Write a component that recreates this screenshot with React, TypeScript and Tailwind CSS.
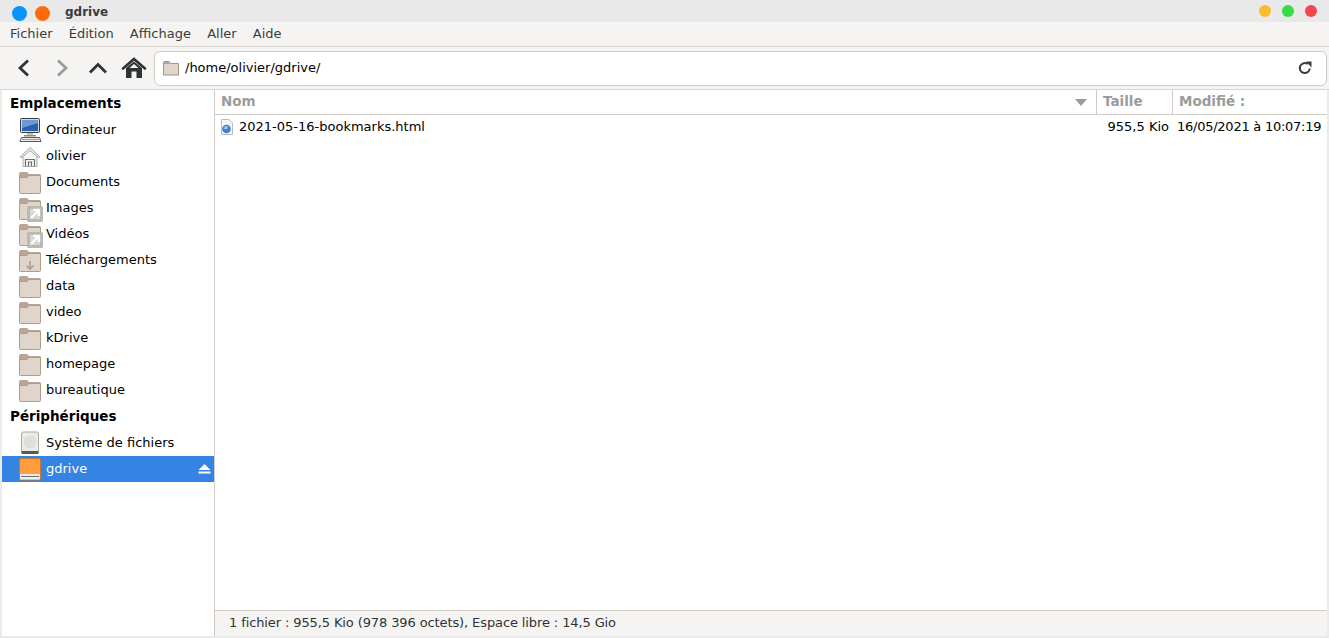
const Folder = ({ children }: { children?: React.ReactNode }) => (
  <svg width="24" height="24" viewBox="0 0 24 24" className="shrink-0 overflow-visible">
    <path d="M1 4Q1 2 3 2H9L11 4H21.500Q23 4 23 5.500V9H1Z" fill="#b9a595" />
    <path d="M1.500 7.500L9 7.500L11 5.500H22.500V22.500Q22.500 23.500 21.500 23.500H2.500Q1.500 23.500 1.500 22.500Z" fill="#dfd5ca" stroke="#b09c8c" strokeWidth="1" />
    {children}
  </svg>
);

const LinkFolder = () => (
  <Folder>
    <rect x="9" y="10" width="16" height="16" rx="1.500" fill="#b9b9b6" />
    <rect x="12" y="13" width="10" height="10" fill="#d6d6d3" />
    <path d="M13 22L20.500 14.500M15 14H21V20" fill="none" stroke="#ffffff" strokeWidth="2.400" />
  </Folder>
);

const DownloadFolder = () => (
  <Folder>
    <path d="M12 13V21M8.500 17.500L12 21L15.500 17.500" fill="none" stroke="#b09c8c" strokeWidth="1.600" />
  </Folder>
);

const Computer = () => (
  <svg width="24" height="24" viewBox="0 0 24 24" className="shrink-0 overflow-visible">
    <rect x="2.500" y="0.500" width="19" height="14" rx="1" fill="#d8d8d6" stroke="#3a3d3f" strokeWidth="1" />
    <rect x="4" y="2" width="16" height="11" fill="#2a62b0" />
    <path d="M4 2H20V5L4 10Z" fill="#6c9ad6" />
    <rect x="9" y="15" width="6" height="2.500" fill="#c2c2bf" />
    <rect x="6" y="17" width="12" height="1.500" fill="#8a8c8c" />
    <path d="M3.500 19.500H21.500L23 23.500H2Z" fill="#efefec" stroke="#55595c" strokeWidth="1" />
    <path d="M4 21.500H21" stroke="#9a9c9c" strokeWidth="1" />
  </svg>
);

const HomeOutline = () => (
  <svg width="24" height="24" viewBox="0 0 24 24" className="shrink-0 overflow-visible">
    <path d="M5 11V22.500H19V11L12 5Z" fill="#f7f7f5" stroke="#a9a9a6" strokeWidth="1" />
    <path d="M2 13L12 3.500L22 13L20 13.500L12 6.500L4 13.500Z" fill="#ecece9" stroke="#a9a9a6" strokeWidth="1" strokeLinejoin="round" />
    <path d="M7.500 22V15.500H16.500V22M10.500 22V18H13.500V22" fill="none" stroke="#6f6f6c" strokeWidth="1.200" />
  </svg>
);

const Disk = () => (
  <svg width="24" height="24" viewBox="0 0 24 24" className="shrink-0">
    <rect x="3.500" y="1" width="17" height="21.500" rx="2" fill="#ebebe8" stroke="#a9a9a6" strokeWidth="1" />
    <circle cx="12" cy="11" r="6.500" fill="#dededb" />
    <rect x="3.500" y="20" width="17" height="3" rx="1" fill="#55595c" />
  </svg>
);

const OrangeDrive = () => (
  <svg width="24" height="24" viewBox="0 0 24 24" className="shrink-0">
    <rect x="1.500" y="1.500" width="21" height="21.500" rx="1.500" fill="#ff9c3f" stroke="#c9762e" strokeWidth="1" />
    <rect x="2" y="17" width="20" height="5.500" fill="#efefec" />
    <rect x="3" y="19" width="18" height="1" fill="#6f6f6c" />
  </svg>
);

const Row = ({ icon, label }: { icon: React.ReactNode; label: string }) => (
  <div className="flex h-[26px] items-center gap-[4px] pl-[16px] text-black">
    {icon}
    <span>{label}</span>
  </div>
);

const places: [React.ReactNode, string][] = [
  [<Computer />, "Ordinateur"],
  [<HomeOutline />, "olivier"],
  [<Folder />, "Documents"],
  [<LinkFolder />, "Images"],
  [<LinkFolder />, "Vidéos"],
  [<DownloadFolder />, "Téléchargements"],
  [<Folder />, "data"],
  [<Folder />, "video"],
  [<Folder />, "kDrive"],
  [<Folder />, "homepage"],
  [<Folder />, "bureautique"],
];

export default function App() {
  return (
    <div className="flex h-[638px] w-[1329px] flex-col overflow-hidden bg-[#eaeaea] text-[13px] text-[#2e3436] [font-family:'DejaVu_Sans',sans-serif]">
      <div className="flex h-[22px] shrink-0 items-center bg-[#e9e9e9] pl-[12px] pr-[12px]">
        <span className="mt-[4px] h-[15px] w-[15px] rounded-full bg-[#0a93fb]" />
        <span className="ml-[8px] mt-[4px] h-[15px] w-[15px] rounded-full bg-[#fd6a0b]" />
        <span className="ml-[15px] mt-[2px] text-[12px] font-bold leading-none text-[#3a3a3a]">gdrive</span>
        <div className="ml-auto flex gap-[11px]">
          <span className="h-[12px] w-[12px] rounded-full bg-[#fcbb2c]" />
          <span className="h-[12px] w-[12px] rounded-full bg-[#35dc47]" />
          <span className="h-[12px] w-[12px] rounded-full bg-[#f2454f]" />
        </div>
      </div>
      <div className="flex h-[24px] shrink-0 items-center gap-[16.200px] bg-[#f5f4f2] pl-[10px] text-[#3a3d3f]">
        <span>Fichier</span>
        <span>Édition</span>
        <span>Affichage</span>
        <span>Aller</span>
        <span>Aide</span>
      </div>
      <div className="flex h-[44px] shrink-0 items-center border-y border-[#d8d5cf] bg-[#f5f4f2] pl-[12px] pr-[2px]">
        <svg width="24" height="24" viewBox="0 0 24 24" className="shrink-0">
          <path d="M16 4.500L8 12L16 19.500" fill="none" stroke="#2e3436" strokeWidth="2.800" />
        </svg>
        <svg width="24" height="24" viewBox="0 0 24 24" className="ml-[13px] shrink-0">
          <path d="M9 4.500L17 12L9 19.500" fill="none" stroke="#9a9c9c" strokeWidth="2.800" />
        </svg>
        <svg width="24" height="24" viewBox="0 0 24 24" className="ml-[13px] shrink-0">
          <path d="M4 16.500L12 8.500L20 16.500" fill="none" stroke="#2e3436" strokeWidth="2.800" />
        </svg>
        <svg width="26" height="24" viewBox="0 0 26 24" className="ml-[11px] shrink-0">
          <path d="M2 12.500L13 3L24 12.500" fill="none" stroke="#2e3436" strokeWidth="2.600" strokeLinecap="round" />
          <path fillRule="evenodd" d="M5 12L13 5.500L21 12V22H15.500V15.500H10.500V22H5ZM13 8L8.500 12H17.500Z" fill="#2e3436" />
        </svg>
        <div className="ml-[7px] flex h-[35px] flex-1 items-center rounded-[6px] border border-[#d0ccc5] bg-white pl-[8px] pr-[14px] text-black">
          <svg width="16" height="16" viewBox="0 0 16 16" className="shrink-0">
            <path d="M0.500 3V15H15.500V3.500H8L6 1.500H1.500Q0.500 1.500 0.500 3Z" fill="#dfd5ca" stroke="#a8937f" strokeWidth="1" />
            <path d="M1 2H6L7.500 4H1Z" fill="#b9a595" />
          </svg>
          <span className="ml-[6px]">/home/olivier/gdrive/</span>
          <svg width="14" height="14" viewBox="0 0 14 14" className="ml-auto shrink-0">
            <path d="M11.800 7.500A5 5 0 1 1 9.800 3" fill="none" stroke="#3a3d3f" strokeWidth="2" />
            <path d="M8 0.500H13.500V6.500Z" fill="#3a3d3f" />
          </svg>
        </div>
      </div>
      <div className="ml-[2px] mr-[2px] flex min-h-0 flex-1 bg-white">
        <div className="flex w-[213px] shrink-0 flex-col border-r border-[#d0ccc5]">
          <div className="flex h-[27px] items-center pb-[1px] pl-[8px] text-[13.500px] font-bold text-black">Emplacements</div>
          {places.map(([icon, label]) => (
            <Row key={label} icon={icon} label={label} />
          ))}
          <div className="flex h-[27px] items-center pb-[1px] pl-[8px] text-[13.500px] font-bold text-black">Périphériques</div>
          <Row icon={<Disk />} label="Système de fichiers" />
          <div className="flex h-[26px] items-center gap-[4px] bg-[#3584e4] pl-[16px] pr-[3px] text-white">
            <OrangeDrive />
            <span>gdrive</span>
            <svg width="13" height="12" viewBox="0 0 13 12" className="ml-auto shrink-0">
              <path d="M6.500 1L12.500 7H0.500Z M0.500 8.500H12.500V10.500H0.500Z" fill="#ffffff" />
            </svg>
          </div>
        </div>
        <div className="flex min-w-0 flex-1 flex-col">
          <div className="flex h-[25px] shrink-0 border-b border-[#d0ccc5] text-[13.500px] font-bold text-[#9a9c9c]">
            <div className="flex flex-1 items-center justify-between border-r border-[#d0ccc5] pb-[2px] pl-[6px] pr-[9px]">
              <span>Nom</span>
              <svg width="12" height="7" viewBox="0 0 12 7" className="mt-[2px]"><path d="M0 0H12L6 7Z" fill="#9a9c9c" /></svg>
            </div>
            <div className="flex w-[76px] shrink-0 items-center border-r border-[#d0ccc5] pb-[2px] pl-[6px]">Taille</div>
            <div className="flex w-[154px] shrink-0 items-center pb-[2px] pl-[6px]">Modifié :</div>
          </div>
          <div className="flex h-[24px] shrink-0 items-center pb-[1px] text-black">
            <div className="flex flex-1 items-center pl-[4px]">
              <svg width="16" height="16" viewBox="0 0 16 16" className="shrink-0">
                <path d="M2.500 0.500H10L13.500 4V15.500H2.500Z" fill="#f6f6f4" stroke="#b9b9b6" strokeWidth="1" />
                <circle cx="7.500" cy="10" r="4.300" fill="#3f7fd8" />
                <path d="M6 7L9 7.500L8 10L5 10Z" fill="#a8c8f0" />
              </svg>
              <span className="ml-[4px]">2021-05-16-bookmarks.html</span>
            </div>
            <div className="w-[76px] shrink-0 pr-[4px] text-right">955,5 Kio</div>
            <div className="w-[154px] shrink-0 whitespace-nowrap pl-[4px] tracking-[-0.25px]">16/05/2021 à 10:07:19</div>
          </div>
          <div className="flex-1" />
          <div className="flex h-[26px] shrink-0 items-center border-t border-[#d0ccc5] bg-[#f5f4f2] pb-[1px] pl-[14px] tracking-[-0.11px] text-[#2e3436]">
            1 fichier : 955,5 Kio (978 396 octets), Espace libre : 14,5 Gio
          </div>
        </div>
      </div>
      <div className="h-[2px] shrink-0" />
    </div>
  );
}
